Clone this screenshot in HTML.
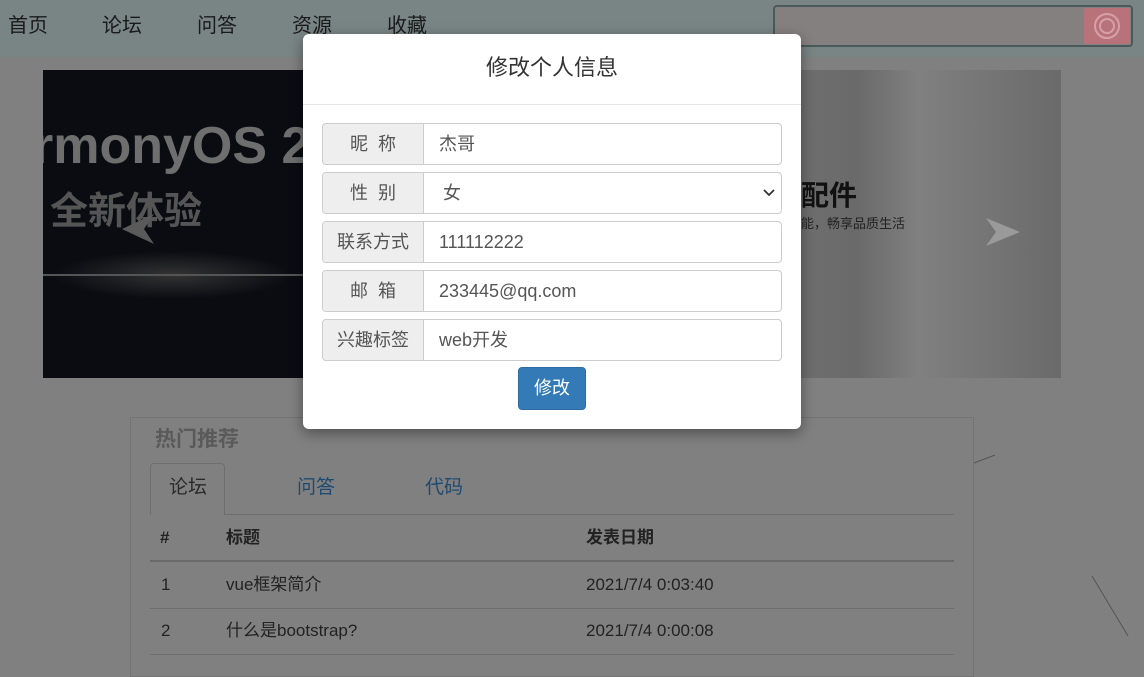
<!DOCTYPE html>
<html><head><meta charset="utf-8"><style>
*{box-sizing:border-box;margin:0;padding:0}
body{width:1144px;height:657px;overflow:hidden;background:#808080;font-family:"Liberation Sans","Noto Sans CJK SC",sans-serif;position:relative;color:#333}
.nav{position:absolute;left:0;top:0;width:1144px;height:57px;background:#798585}
.nav span{position:absolute;top:14px;font-size:20px;line-height:24px;color:#1a1a1a}
.search{position:absolute;left:773px;top:5px;width:360px;height:42px;border:2px solid #4a5a5a;border-radius:4px;background:#858080}
.sbtn{position:absolute;right:1px;top:1px;width:46px;height:36px;background:#b8727a;border-radius:2px}
.car{position:absolute;left:43px;top:70px;width:1018px;height:308px;background:linear-gradient(90deg,#7e7e7e 0%,#7a7a7a 60%,#6a6a6a 80%,#808080 86%,#6a6a6a 100%)}
.dark{position:absolute;left:43px;top:70px;width:262px;height:308px;background:radial-gradient(ellipse 150px 30px at 130px 205px,#333 0%,#0a0c12 80%),#05070c}
.panel{position:absolute;left:130px;top:417px;width:844px;height:260px;border:1px solid #737373}
.abs{position:absolute;line-height:22px}
.modal{position:absolute;left:303px;top:34px;width:498px;height:395px;background:#fff;border-radius:6px;box-shadow:0 4px 14px rgba(0,0,0,.4)}
.row{position:absolute;left:19px;width:460px;height:42px;border:1px solid #ccc;border-radius:4px;overflow:hidden}
.lab{position:absolute;left:0;top:0;width:101px;height:100%;background:#eee;border-right:1px solid #ccc;text-align:center;line-height:40px;font-size:18px;color:#555}
.val{position:absolute;left:116px;top:0;line-height:40px;font-size:18px;color:#555}
</style></head><body>
<div class="nav">
<span style="left:8px">首页</span><span style="left:102px">论坛</span><span style="left:197px">问答</span><span style="left:292px">资源</span><span style="left:387px">收藏</span>
<div class="search"><div class="sbtn"><svg width="46" height="36"><circle cx="23" cy="18" r="12" fill="none" stroke="#d8a0a6" stroke-width="2"/><circle cx="23" cy="18" r="7" fill="none" stroke="#d8a0a6" stroke-width="2"/></svg></div></div>
</div>
<div class="car"></div>
<div class="dark"></div>
<div class="abs" style="left:43px;top:118px;font-size:52px;line-height:56px;font-weight:bold;color:#6e6e6e;width:262px;overflow:hidden;white-space:nowrap"><span style="margin-left:-10px">rmonyOS 2</span></div>
<div class="abs" style="left:50px;top:190px;font-size:38px;line-height:44px;font-weight:bold;color:#555">全新体验</div>
<div class="abs" style="left:43px;top:274px;width:262px;height:2px;background:#555"></div>
<svg class="abs" style="left:122px;top:214px" width="34" height="30"><polygon points="0,15 32,0 22,15 32,30" fill="#5a5a5a"/></svg>
<svg class="abs" style="left:986px;top:218px" width="34" height="30"><polygon points="34,14 0,0 10,14 0,28" fill="#9a9a9a"/></svg>
<div class="abs" style="left:801px;top:180px;font-size:28px;line-height:32px;font-weight:bold;color:#111">配件</div>
<div class="abs" style="left:801px;top:216px;font-size:13px;line-height:16px;color:#222">能，畅享品质生活</div>
<div class="panel"></div>
<div class="abs" style="left:155px;top:428px;font-size:21px;line-height:24px;font-weight:bold;color:#5a5a5a">热门推荐</div>
<div class="abs" style="left:150px;top:463px;width:75px;height:52px;border:1px solid #6e6e6e;border-bottom:none;border-radius:4px 4px 0 0;background:#808080"></div>
<div class="abs" style="left:224px;top:514px;width:730px;border-top:1px solid #6e6e6e"></div>
<div class="abs" style="left:169px;top:477px;font-size:19px;color:#2a2a2a">论坛</div>
<div class="abs" style="left:297px;top:477px;font-size:19px;color:#1f4a70">问答</div>
<div class="abs" style="left:425px;top:477px;font-size:19px;color:#1f4a70">代码</div>
<div class="abs" style="left:160px;top:527px;font-size:17px;font-weight:bold;color:#222">#</div>
<div class="abs" style="left:226px;top:527px;font-size:17px;font-weight:bold;color:#222">标题</div>
<div class="abs" style="left:586px;top:527px;font-size:17px;font-weight:bold;color:#222">发表日期</div>
<div class="abs" style="left:150px;top:560px;width:804px;border-top:2px solid #6a6a6a"></div>
<div class="abs" style="left:161px;top:574px;font-size:17px;color:#222">1</div>
<div class="abs" style="left:226px;top:574px;font-size:17px;color:#222">vue框架简介</div>
<div class="abs" style="left:586px;top:574px;font-size:17px;color:#222">2021/7/4 0:03:40</div>
<div class="abs" style="left:150px;top:608px;width:804px;border-top:1px solid #6e6e6e"></div>
<div class="abs" style="left:161px;top:620px;font-size:17px;color:#222">2</div>
<div class="abs" style="left:226px;top:620px;font-size:17px;color:#222">什么是bootstrap?</div>
<div class="abs" style="left:586px;top:620px;font-size:17px;color:#222">2021/7/4 0:00:08</div>
<div class="abs" style="left:150px;top:654px;width:804px;border-top:1px solid #6e6e6e"></div>
<svg class="abs" style="left:970px;top:450px" width="174" height="207"><line x1="4" y1="13" x2="25" y2="5" stroke="#555"/><line x1="122" y1="126" x2="158" y2="186" stroke="#555"/></svg>
<div class="modal">
<div class="abs" style="left:0;top:21px;width:498px;text-align:center;font-size:22px;line-height:26px;color:#333">修改个人信息</div>
<div class="abs" style="left:0;top:70px;width:498px;border-top:1px solid #e5e5e5"></div>
<div class="row" style="top:89px"><div class="lab">昵&nbsp;&nbsp;称</div><div class="val">杰哥</div></div>
<div class="row" style="top:138px"><div class="lab">性&nbsp;&nbsp;别</div><div class="val" style="left:120px">女</div><svg class="abs" style="right:6px;top:14px" width="12" height="12"><polyline points="1,3 6,8 11,3" fill="none" stroke="#333" stroke-width="1.8"/></svg></div>
<div class="row" style="top:187px"><div class="lab">联系方式</div><div class="val">111112222</div></div>
<div class="row" style="top:236px"><div class="lab">邮&nbsp;&nbsp;箱</div><div class="val">233445@qq.com</div></div>
<div class="row" style="top:285px"><div class="lab">兴趣标签</div><div class="val">web开发</div></div>
<div class="abs" style="left:215px;top:333px;width:68px;height:43px;background:#337ab7;border:1px solid #2e6da4;border-radius:4px;color:#fff;font-size:18px;text-align:center;line-height:40px">修改</div>
</div>
</body></html>
